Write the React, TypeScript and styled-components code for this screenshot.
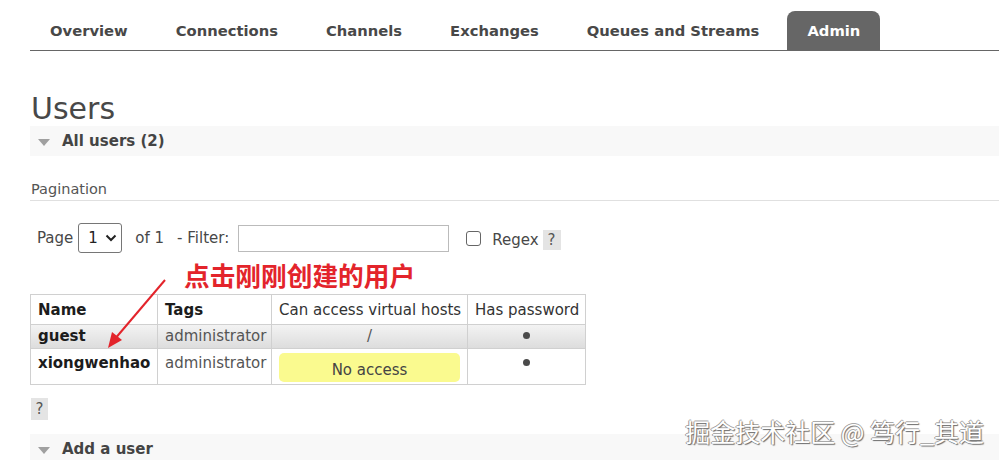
import styled, { createGlobalStyle, css } from 'styled-components';

const GlobalStyle = createGlobalStyle`
  html, body {
    margin: 0;
    padding: 0;
    background: #fff;
  }
  body {
    font-family: 'DejaVu Sans', Verdana, sans-serif;
    font-size: 15px;
    color: #484848;
  }
`;

const Page = styled.div`
  position: relative;
  width: 999px;
  height: 460px;
  overflow: hidden;
  padding: 11px 0 0 30px;
  box-sizing: border-box;
`;

const Nav = styled.ul`
  display: flex;
  margin: 0;
  padding: 0;
  list-style: none;
  border-bottom: 1px solid #666;
`;

const Tab = styled.li<{ $active?: boolean }>`
  height: 39px;
  padding: 0 20px;
  margin-right: 8px;
  display: flex;
  align-items: center;
  font-weight: bold;
  font-size: 14.75px;
  color: #484848;
  border-radius: 8px 8px 0 0;

  ${(p) =>
    p.$active &&
    css`
      background: #666;
      color: #fff;
    `}
`;

const Title = styled.h1`
  margin: 41px 0 0 1px;
  font-size: 30px;
  line-height: 34px;
  font-weight: normal;
  color: #484848;
`;

const SectionBar = styled.div`
  height: 30px;
  background: #f8f8f8;
  display: flex;
  align-items: center;
  gap: 12px;
  padding-left: 8px;
  font-weight: bold;
  color: #444;
`;

const Triangle = styled.span`
  width: 0;
  height: 0;
  border-left: 6px solid transparent;
  border-right: 6px solid transparent;
  border-top: 7px solid #a0a0a0;
  margin-top: 2px;
`;

const SubHeading = styled.div`
  margin-top: 25px;
  padding: 0 0 2px 1px;
  font-size: 14.5px;
  line-height: 17px;
  color: #555;
  border-bottom: 1px solid #e0e0e0;
`;

const Controls = styled.div`
  display: flex;
  align-items: center;
  margin-top: 22px;
  padding-left: 7px;
  height: 30px;
`;

const Label = styled.span<{ $gap?: number; $drop?: number }>`
  margin-right: ${(p) => p.$gap ?? 0}px;
  padding-top: ${(p) => p.$drop ?? 0}px;
  white-space: nowrap;
`;

const SelectWrap = styled.div`
  position: relative;
  margin-right: 13px;
`;

const Select = styled.select`
  appearance: none;
  width: 44px;
  height: 30px;
  padding: 0 0 0 9px;
  border: 1px solid #767676;
  border-radius: 3px;
  background: #fff;
  font-family: inherit;
  font-size: 15px;
  color: #222;
`;

const Chevron = styled.svg`
  position: absolute;
  right: 5px;
  top: 11px;
  pointer-events: none;
`;

const FilterInput = styled.input`
  width: 211px;
  height: 27px;
  box-sizing: border-box;
  border: 1px solid #bbb;
  margin-right: 17px;
  font-family: inherit;
`;

const Checkbox = styled.input`
  appearance: none;
  width: 15px;
  height: 15px;
  margin: 0 11px 0 0;
  border: 1px solid #666;
  border-radius: 3px;
  background: #fff;
`;

const Help = styled.span<{ $w?: number; $h?: number; $drop?: number }>`
  display: inline-flex;
  align-items: center;
  justify-content: center;
  width: ${(p) => p.$w ?? 18}px;
  height: ${(p) => p.$h ?? 20}px;
  margin-top: ${(p) => p.$drop ?? 0}px;
  background: #e4e4e4;
  color: #555;
  font-size: 15px;
`;

const HelpRow = styled.div`
  display: flex;
  margin: 13px 0 14px 1px;
`;

const Table = styled.table`
  margin-top: 41px;
  width: 556px;
  table-layout: fixed;
  border-collapse: collapse;
  border: 1px solid #ccc;
`;

const Th = styled.th<{ $bold?: boolean }>`
  height: 29px;
  padding: 0 7px;
  text-align: left;
  border: 1px solid #d0d0d0;
  font-weight: ${(p) => (p.$bold ? 'bold' : 'normal')};
  color: ${(p) => (p.$bold ? '#1c1c1c' : '#333')};
  white-space: nowrap;
  overflow: hidden;
`;

const Row = styled.tr<{ $alt?: boolean }>`
  ${(p) =>
    p.$alt &&
    css`
      background: linear-gradient(#f3f3f3, #dcdcdc);
    `}
`;

const Td = styled.td<{ $center?: boolean; $bold?: boolean; $tall?: boolean }>`
  border: 1px solid #d0d0d0;
  padding: ${(p) => (p.$tall ? '3px 7px 2px' : '0 7px')};
  height: ${(p) => (p.$tall ? 'auto' : '23px')};
  vertical-align: top;
  line-height: 22px;
  white-space: nowrap;
  overflow: hidden;
  text-align: ${(p) => (p.$center ? 'center' : 'left')};
  font-weight: ${(p) => (p.$bold ? 'bold' : 'normal')};
  color: ${(p) => (p.$bold ? '#1c1c1c' : '#555')};
`;

const Dot = styled.span`
  display: inline-block;
  width: 7px;
  height: 7px;
  border-radius: 50%;
  background: #4a4a4a;
  vertical-align: middle;
  margin-top: -2px;
`;

const NoAccess = styled.div`
  margin-top: 1px;
  height: 29px;
  border-radius: 5px;
  background: #fafa8f;
  display: flex;
  align-items: center;
  justify-content: center;
  padding-top: 4px;
  box-sizing: border-box;
  color: #444;
`;

const Annotation = styled.div`
  position: absolute;
  left: 184px;
  top: 257px;
  font-family: 'Noto Sans CJK SC', sans-serif;
  font-weight: bold;
  font-size: 25.7px;
  line-height: 36px;
  color: #e3242b;
`;

const Arrow = styled.svg`
  position: absolute;
  left: 100px;
  top: 274px;
`;

const Watermark = styled.div`
  position: absolute;
  right: 15px;
  bottom: 13px;
  font-family: 'Noto Sans CJK SC', sans-serif;
  font-size: 25px;
  line-height: 32px;
  color: #fff;
  text-shadow: 1px 1px 1px #6a6a6a, -1px 0 0 #999, 0 -1px 0 #aaa;
  white-space: nowrap;
`;

const tabs = ['Overview', 'Connections', 'Channels', 'Exchanges', 'Queues and Streams', 'Admin'];

export default function App() {
  return (
    <Page>
      <GlobalStyle />
      <Nav>
        {tabs.map((t) => (
          <Tab key={t} $active={t === 'Admin'}>
            {t}
          </Tab>
        ))}
      </Nav>

      <Title>Users</Title>
      <SectionBar>
        <Triangle />
        All users (2)
      </SectionBar>

      <SubHeading>Pagination</SubHeading>
      <Controls>
        <Label $gap={5}>Page</Label>
        <SelectWrap>
          <Select defaultValue="1">
            <option value="1">1</option>
          </Select>
          <Chevron width="12" height="8" viewBox="0 0 12 8">
            <path d="M1.5 1.5 L6 6 L10.5 1.5" fill="none" stroke="#222" strokeWidth="2" />
          </Chevron>
        </SelectWrap>
        <Label $gap={13}>of 1</Label>
        <Label $gap={9}>- Filter:</Label>
        <FilterInput type="text" />
        <Checkbox type="checkbox" />
        <Label $gap={4} $drop={4}>Regex</Label>
        <Help $drop={4}>?</Help>
      </Controls>

      <Table>
        <colgroup>
          <col style={{ width: 127 }} />
          <col style={{ width: 114 }} />
          <col style={{ width: 196 }} />
          <col style={{ width: 118 }} />
        </colgroup>
        <thead>
          <tr>
            <Th $bold>Name</Th>
            <Th $bold>Tags</Th>
            <Th>Can access virtual hosts</Th>
            <Th>Has password</Th>
          </tr>
        </thead>
        <tbody>
          <Row $alt>
            <Td $bold>guest</Td>
            <Td>administrator</Td>
            <Td $center>/</Td>
            <Td $center><Dot /></Td>
          </Row>
          <Row>
            <Td $bold $tall>xiongwenhao</Td>
            <Td $tall>administrator</Td>
            <Td $tall>
              <NoAccess>No access</NoAccess>
            </Td>
            <Td $center $tall><Dot /></Td>
          </Row>
        </tbody>
      </Table>

      <HelpRow>
        <Help $w={17} $h={22}>?</Help>
      </HelpRow>

      <SectionBar>
        <Triangle />
        Add a user
      </SectionBar>

      <Annotation>点击刚刚创建的用户</Annotation>
      <Arrow width="70" height="80" viewBox="0 0 70 80">
        <line x1="65" y1="6" x2="14" y2="66" stroke="#e3242b" strokeWidth="2" />
        <polygon points="8,74 12,58 22,66" fill="#e3242b" />
      </Arrow>

      <Watermark>掘金技术社区 @ 笃行_其道</Watermark>
    </Page>
  );
}
